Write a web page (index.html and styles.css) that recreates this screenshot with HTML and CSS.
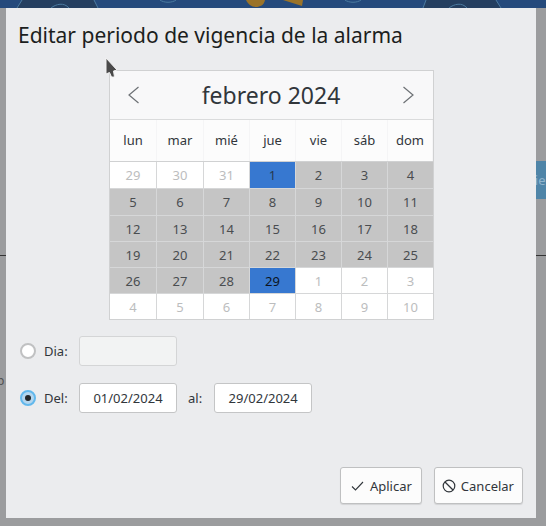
FILE: index.html
```html
<!DOCTYPE html>
<html lang="es">
<head>
    <meta charset="UTF-8">
    <meta name="viewport" content="width=device-width, initial-scale=1.0">
    <title>Editar periodo de vigencia de la alarma</title>
    <link rel="stylesheet" href="styles.css">
</head>
<body>
    <!-- lo que asoma detras del dialogo -->
    <div class="backdrop">
        <svg class="banner" width="546" height="8" viewBox="0 0 546 8">
            <rect width="546" height="8" fill="#254a7c"/>
            <path d="M22 0h72l4 8H17z" fill="#253f60"/>
            <path d="M17 8l5-8M94 0l4 8" stroke="#4c7ba0" fill="none"/>
            <path d="M51 8c5-4 13-6 18 0" stroke="#4c7ba0" fill="none"/>
            <path d="M160 0c4 3 12 3 16 0" stroke="#4c7ba0" fill="none"/>
            <path d="M246 0h19c-1 5-5 7-9 7-5 0-8-3-10-7z" fill="#9a7329"/>
            <path d="M283 0h20l-1 6z" fill="#9a7329"/>
            <path d="M345 0c4 3 12 3 16 0" stroke="#4c7ba0" fill="none"/>
            <path d="M423 8l3-8h70l5 8z" fill="#253f60"/>
            <path d="M423 8l3-8M496 0l5 8" stroke="#4c7ba0" fill="none"/>
            <path d="M449 8c5-4 13-6 18 0" stroke="#4c7ba0" fill="none"/>
        </svg>
        <div class="line line-left"></div>
        <div class="line line-right"></div>
        <div class="stray-letter">p</div>
        <div class="stray-button">Vie</div>
    </div>

    <div class="dialog">
        <h1>Editar periodo de vigencia de la alarma</h1>

        <div class="calendar">
            <div class="cal-header">
                <svg width="12" height="18" viewBox="0 0 12 18"><path d="M11.5 1L2 9l9.5 8" fill="none" stroke="#6d7175" stroke-width="1.2"/></svg>
                <div class="cal-title">febrero 2024</div>
                <svg width="12" height="18" viewBox="0 0 12 18"><path d="M0.5 1L10 9l-9.5 8" fill="none" stroke="#6d7175" stroke-width="1.2"/></svg>
            </div>
            <div class="cal-weekdays">
                <div>lun</div><div>mar</div><div>mié</div><div>jue</div><div>vie</div><div>sáb</div><div>dom</div>
            </div>
            <div class="cal-days">
                <div class="day off">29</div><div class="day off">30</div><div class="day off">31</div><div class="day edge">1</div><div class="day range">2</div><div class="day range">3</div><div class="day range">4</div>
                <div class="day range">5</div><div class="day range">6</div><div class="day range">7</div><div class="day range">8</div><div class="day range">9</div><div class="day range">10</div><div class="day range">11</div>
                <div class="day range">12</div><div class="day range">13</div><div class="day range">14</div><div class="day range">15</div><div class="day range">16</div><div class="day range">17</div><div class="day range">18</div>
                <div class="day range">19</div><div class="day range">20</div><div class="day range">21</div><div class="day range">22</div><div class="day range">23</div><div class="day range">24</div><div class="day range">25</div>
                <div class="day range">26</div><div class="day range">27</div><div class="day range">28</div><div class="day edge today">29</div><div class="day off">1</div><div class="day off">2</div><div class="day off">3</div>
                <div class="day off">4</div><div class="day off">5</div><div class="day off">6</div><div class="day off">7</div><div class="day off">8</div><div class="day off">9</div><div class="day off">10</div>
            </div>
        </div>

        <div class="form-row first">
            <span class="radio"></span>
            <label class="row-label">Dia:</label>
            <input class="date-input" type="text" disabled>
        </div>
        <div class="form-row">
            <span class="radio checked"></span>
            <label class="row-label">Del:</label>
            <input class="date-input" type="text" value="01/02/2024">
            <label class="to-label">al:</label>
            <input class="date-input" type="text" value="29/02/2024">
        </div>

        <div class="actions">
            <button class="btn btn-apply">
                <svg width="15" height="16" viewBox="0 0 15 16"><path d="M2 8.5l3.5 3.5 7.5-8" fill="none" stroke="#31363b" stroke-width="1.1"/></svg>
                Aplicar
            </button>
            <button class="btn btn-cancel">
                <svg width="14" height="16" viewBox="0 0 14 16"><circle cx="7" cy="8" r="5.8" fill="none" stroke="#31363b" stroke-width="1.2"/><path d="M3 4l8 8" stroke="#31363b" stroke-width="1.2"/></svg>
                Cancelar
            </button>
        </div>

        <svg class="cursor" width="14" height="22" viewBox="0 0 14 22">
            <path d="M1 1L12 13L8.5 14L9.5 20L6.5 20L4.5 15.5L1 17z" fill="#4a4a4a" stroke="#f2f2f2" stroke-width="1"/>
        </svg>
    </div>
</body>
</html>
```

FILE: styles.css
```css
html, body {
    height: 100%;
}

body {
    font-family: "Noto Sans", sans-serif;
    background-color: #9b9c9e;
    margin: 0;
    padding: 8px 10px 8px 6px;
    box-sizing: border-box;
    overflow: hidden;
    color: #31363b;
}

.backdrop {
    position: absolute;
    inset: 0;
    overflow: hidden;
}

.banner {
    display: block;
}

.line {
    position: absolute;
    top: 255px;
    height: 1px;
    background: #333;
}

.line-left {
    left: 0;
    width: 6px;
}

.line-right {
    right: 0;
    width: 10px;
}

.stray-letter {
    position: absolute;
    left: -3px;
    top: 372px;
    font-size: 12px;
    color: #4f5052;
}

.stray-button {
    position: absolute;
    left: 520px;
    top: 161px;
    width: 26px;
    height: 38px;
    background: #4f85a8;
    color: #8fb4cc;
    font-size: 13px;
    line-height: 38px;
    padding-left: 7px;
    box-sizing: border-box;
    overflow: hidden;
}

.dialog {
    position: relative;
    background: #ebecee;
    height: 100%;
    box-sizing: border-box;
    padding: 12px 13px 14px 12px;
    display: flex;
    flex-direction: column;
}

h1 {
    font-size: 21px;
    font-weight: 400;
    line-height: 30px;
    color: #1c1e20;
    margin: 0 0 20px 0;
}

.calendar {
    width: 325px;
    margin-left: 91px;
    box-sizing: border-box;
    border: 1px solid #d0d1d2;
    background: #fcfcfc;
}

.cal-header {
    height: 48px;
    display: flex;
    justify-content: space-between;
    align-items: center;
    padding: 0 18px 0 17px;
    background: #f8f8f9;
    border-bottom: 1px solid #dadbdc;
}

.cal-title {
    font-size: 23px;
    color: #31363b;
}

.cal-weekdays {
    display: grid;
    grid-template-columns: 47px 47px 46px 46px 46px 46px 45px;
    height: 41px;
    background: #fcfcfc;
}

.cal-weekdays div {
    font-size: 13px;
    line-height: 41px;
    text-align: center;
    border-right: 1px solid #f5f5f6;
}

.cal-days {
    display: grid;
    grid-template-columns: 47px 47px 46px 46px 46px 46px 45px;
    grid-template-rows: 27px 27px 26px 26px 26px 25px;
    background: #fff;
    border-top: 1px solid #d0d1d2;
}

.day {
    font-size: 13px;
    display: flex;
    align-items: center;
    justify-content: center;
    box-sizing: border-box;
    border-right: 1px solid #d6d7d8;
    border-bottom: 1px solid #d6d7d8;
}

.day:nth-child(7n) {
    border-right: none;
}

.day:nth-last-child(-n+7) {
    border-bottom: none;
}

.off {
    color: #bcbdbe;
}

.range {
    background: #c5c5c5;
    color: #4a4d50;
}

.edge {
    background: #3778d0;
    color: #26384f;
}

.today {
    color: #0c1420;
}

.form-row {
    display: flex;
    align-items: center;
    margin-top: 17px;
    margin-left: 2px;
    height: 30px;
}

.form-row.first {
    margin-top: 16px;
}

.radio {
    width: 16px;
    height: 16px;
    box-sizing: border-box;
    border-radius: 50%;
    background: #fff;
    border: 2px solid #c0c1c2;
    margin-right: 8px;
    position: relative;
}

.radio.checked {
    background: #b4d6ee;
    border-color: #62b8ec;
}

.radio.checked::after {
    content: "";
    position: absolute;
    left: 3px;
    top: 3px;
    width: 6px;
    height: 6px;
    border-radius: 50%;
    background: #232629;
}

.row-label {
    font-size: 13px;
    width: 35px;
}

.to-label {
    font-size: 13px;
    margin: 0 12px 0 11px;
}

.date-input {
    width: 98px;
    height: 30px;
    box-sizing: border-box;
    border: 1px solid #c4c5c6;
    border-radius: 3px;
    background: #fff;
    font-family: inherit;
    font-size: 13px;
    color: #31363b;
    text-align: center;
    padding: 0;
    outline: none;
}

.date-input:disabled {
    background: #f2f3f3;
    border-color: #d4d5d6;
}

.actions {
    margin-top: auto;
    display: flex;
    justify-content: flex-end;
    gap: 12px;
}

.btn {
    height: 37px;
    display: flex;
    align-items: center;
    gap: 5px;
    background: #fcfcfc;
    border: 1px solid #bfc0c1;
    border-radius: 3px;
    box-shadow: 0 1px 1px rgba(0, 0, 0, 0.1);
    font-family: inherit;
    font-size: 13px;
    color: #31363b;
}

.btn-apply {
    padding: 0 9px 0 9px;
}

.btn-cancel {
    padding: 0 8px 0 7px;
}

.cursor {
    position: absolute;
    left: 99px;
    top: 49px;
}
```
